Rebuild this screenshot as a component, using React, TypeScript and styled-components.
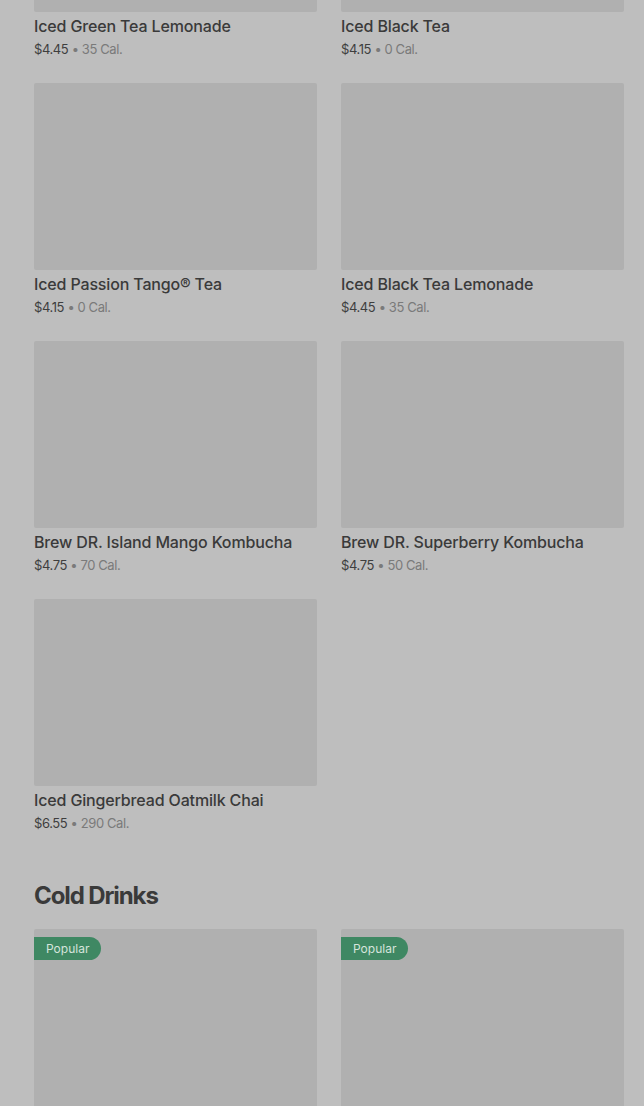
import React from "react";
import styled, { createGlobalStyle } from "styled-components";

const Global = createGlobalStyle`
  html, body { margin: 0; padding: 0; background: #bebebe; }
  body { font-family: Inter, "Noto Sans", "Liberation Sans", sans-serif; overflow: hidden; }
`;

const Page = styled.div`
  height: 1106px;
  overflow: hidden;
  background: #bebebe;
`;

const Content = styled.div`
  margin-top: -175px;
  padding: 0 20px 0 34px;
`;

const Grid = styled.div`
  display: grid;
  grid-template-columns: 283px 283px;
  column-gap: 24px;
  row-gap: 25px;
`;

const Card = styled.div`
  display: flex;
  flex-direction: column;
`;

const Thumb = styled.div`
  position: relative;
  height: 187px;
  background: #b0b0b0;
  border-radius: 2px;
`;

const Badge = styled.span`
  position: absolute;
  top: 8px;
  left: 0;
  height: 23px;
  padding: 0 12px;
  display: flex;
  align-items: center;
  background: #3f8863;
  color: #d6e4dc;
  font-size: 12px;
  border-radius: 0 12px 12px 0;
`;

const Title = styled.div`
  margin-top: 4px;
  font-size: 16px;
  line-height: 20px;
  font-weight: 500;
  color: #3a3a3a;
  letter-spacing: -0.15px;
`;

const Meta = styled.div`
  margin-top: 4px;
  font-size: 13px;
  line-height: 18px;
  color: #3e3e3e;
  letter-spacing: -0.4px;
`;

const Cal = styled.span`
  color: #7a7a7a;
`;

const Heading = styled.h2`
  margin: 48px 0 17px;
  font-size: 24px;
  line-height: 32px;
  font-weight: 700;
  color: #3a3a3a;
  letter-spacing: -1.1px;
`;

type Item = { name: string; price: string; cal: string; popular?: boolean };

const tea: Item[] = [
  { name: "Iced Green Tea Lemonade", price: "$4.45", cal: "35 Cal." },
  { name: "Iced Black Tea", price: "$4.15", cal: "0 Cal." },
  { name: "Iced Passion Tango® Tea", price: "$4.15", cal: "0 Cal." },
  { name: "Iced Black Tea Lemonade", price: "$4.45", cal: "35 Cal." },
  { name: "Brew DR. Island Mango Kombucha", price: "$4.75", cal: "70 Cal." },
  { name: "Brew DR. Superberry Kombucha", price: "$4.75", cal: "50 Cal." },
  { name: "Iced Gingerbread Oatmilk Chai", price: "$6.55", cal: "290 Cal." },
];

const cold: Item[] = [
  { name: "", price: "", cal: "", popular: true },
  { name: "", price: "", cal: "", popular: true },
];

const ItemCard = ({ item }: { item: Item }) => (
  <Card>
    <Thumb>{item.popular && <Badge>Popular</Badge>}</Thumb>
    {item.name && (
      <>
        <Title>{item.name}</Title>
        <Meta>
          {item.price} <Cal>• {item.cal}</Cal>
        </Meta>
      </>
    )}
  </Card>
);

export default function App() {
  return (
    <Page>
      <Global />
      <Content>
        <Grid>
          {tea.map((it) => (
            <ItemCard key={it.name} item={it} />
          ))}
        </Grid>
        <Heading>Cold Drinks</Heading>
        <Grid>
          {cold.map((it, i) => (
            <ItemCard key={i} item={it} />
          ))}
        </Grid>
      </Content>
    </Page>
  );
}
